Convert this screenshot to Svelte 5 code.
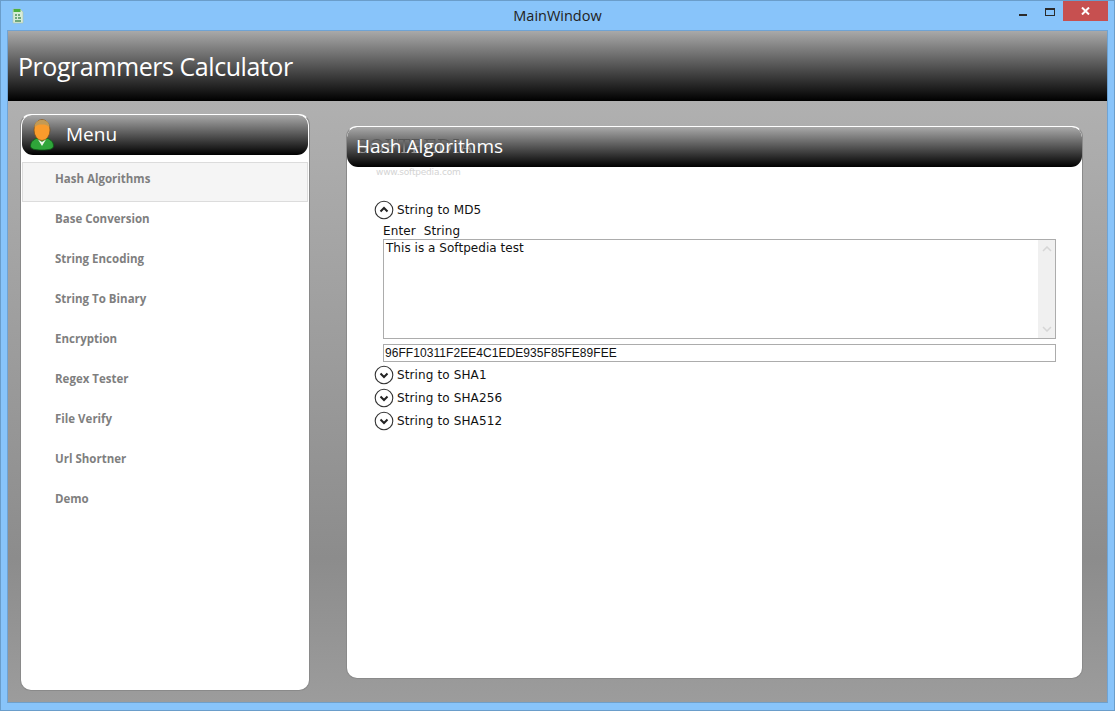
<script>
  const menu = [
    "Hash Algorithms",
    "Base Conversion",
    "String Encoding",
    "String To Binary",
    "Encryption",
    "Regex Tester",
    "File Verify",
    "Url Shortner",
    "Demo"
  ];
  const collapsed = ["String to SHA1", "String to SHA256", "String to SHA512"];
</script>

<div class="window">
  <div class="titlebar">
    <svg class="appicon" width="12" height="16" viewBox="0 0 12 16">
      <path d="M1 1h7l3 3v11H1z" fill="#d8ecd8" stroke="#a9c4a9" stroke-width="0.6" />
      <rect x="1.5" y="1" width="7" height="3" fill="#4caf3f" />
      <path d="M3 6h2v2H3zM6 6h2v2H6zM3 9h2v2H3zM6 9h3v2H6zM3 12h6v2H3z" fill="#6fa87a" />
    </svg>
    <span class="title">MainWindow</span>
    <div class="controls">
      <span class="min"></span>
      <span class="max"></span>
      <span class="close">
        <svg width="9" height="8" viewBox="0 0 9 8">
          <path d="M1 0.5l7 7M8 0.5l-7 7" stroke="#fff" stroke-width="2" />
        </svg>
      </span>
    </div>
  </div>

  <div class="client">
    <header>Programmers Calculator</header>
    <div class="content">
      <aside class="card">
        <div class="cardhead menuhead">
          <svg class="person" width="26" height="32" viewBox="0 0 26 32">
            <path d="M1.500 27c0-5 4-7 8-8.500h7c4 1.500 8 3.500 8 8.500 0 3-4 4-11.500 4S1.500 30 1.500 27z" fill="#2fa53a" stroke="#0d5c17" stroke-width="0.8" />
            <ellipse cx="13" cy="11" rx="8" ry="10.500" fill="#f99b2c" stroke="#7a4f18" stroke-width="0.7" />
            <path d="M5.500 8.500C5.500 3 9 1 13 1s7.500 2 7.500 7.500c-2-2.500-4.500-3-7.500-3s-5.500.5-7.500 3z" fill="#c29a55" />
            <path d="M9 20.500l4 6.500 4-6.500-4 2.500z" fill="#eef5ea" />
          </svg>
          <span class="menutext">Menu</span>
        </div>
        <nav>
          {#each menu as item, i}
            <div class="item" class:active={i === 0}>{item}</div>
          {/each}
        </nav>
      </aside>

      <main class="card panel">
        <div class="cardhead panelhead">
          <span class="mark">SOFTPEDIA</span>
          <span class="headtext">Hash Algorithms</span>
        </div>
        <span class="markurl">www.softpedia.com</span>
        <div class="expanders">
          <div class="exp">
            <svg width="20" height="20" viewBox="0 0 20 20">
              <circle cx="10" cy="10" r="8.8" fill="#fff" stroke="#333" stroke-width="1.1" />
              <path d="M6.500 11.500L10 8l3.500 3.500" fill="none" stroke="#222" stroke-width="2" />
            </svg>
            <span>String to MD5</span>
          </div>
          <div class="body">
            <div class="label">Enter&nbsp; String</div>
            <div class="textarea">
              <div class="text">This is a Softpedia test</div>
              <div class="scroll">
                <svg width="10" height="6" viewBox="0 0 10 6"><path d="M1 5l4-4 4 4" fill="none" stroke="#d6d6d6" stroke-width="1.5" /></svg>
                <svg width="10" height="6" viewBox="0 0 10 6"><path d="M1 1l4 4 4-4" fill="none" stroke="#d6d6d6" stroke-width="1.5" /></svg>
              </div>
            </div>
            <div class="hash">96FF10311F2EE4C1EDE935F85FE89FEE</div>
          </div>
          {#each collapsed as name}
            <div class="exp">
              <svg width="20" height="20" viewBox="0 0 20 20">
                <circle cx="10" cy="10" r="8.8" fill="#fff" stroke="#333" stroke-width="1.1" />
                <path d="M6.500 8.500L10 12l3.500-3.500" fill="none" stroke="#222" stroke-width="2" />
              </svg>
              <span>{name}</span>
            </div>
          {/each}
        </div>
      </main>
    </div>
  </div>
</div>

<style>
  :global(body) {
    margin: 0;
    background: #88c4fa;
  }

  .window {
    box-sizing: border-box;
    width: 1115px;
    height: 711px;
    display: flex;
    flex-direction: column;
    background: #88c4fa;
    border: 1px solid #6a9dca;
    padding: 0 6px 7px 6px;
    font-family: "DejaVu Sans", sans-serif;
  }

  .titlebar {
    height: 29px;
    flex: none;
    display: flex;
    align-items: center;
    justify-content: center;
    position: relative;
    font-family: "Open Sans", sans-serif;
    font-size: 14.5px;
    color: #222;
  }

  .appicon {
    position: absolute;
    left: 5px;
    top: 7px;
  }

  .controls {
    position: absolute;
    right: 0;
    top: 0;
    display: flex;
    align-items: flex-start;
  }

  .min {
    width: 8px;
    height: 2px;
    background: #2b2b2b;
    margin: 13px 18px 0 0;
  }

  .max {
    box-sizing: border-box;
    width: 10px;
    height: 8px;
    border: 1px solid #2b2b2b;
    border-top-width: 2px;
    margin: 7px 8px 0 0;
  }

  .close {
    width: 45px;
    height: 20px;
    background: #c75050;
    display: flex;
    align-items: center;
    justify-content: center;
  }

  .client {
    flex: 1;
    display: flex;
    flex-direction: column;
    min-height: 0;
    border: 1px solid #6fa3d4;
    border-bottom-color: #6f9fc9;
  }

  header {
    box-sizing: border-box;
    height: 70px;
    flex: none;
    padding: 0 0 0 10px;
    display: flex;
    align-items: center;
    background: linear-gradient(#a9a9a9 0%, #000 100%);
    color: #fff;
    font-family: "Open Sans", sans-serif;
    font-size: 25px;
    letter-spacing: -0.45px;
  }

  .content {
    flex: 1;
    min-height: 0;
    display: flex;
    align-items: stretch;
    padding: 13px 24px 11px 12px;
    gap: 36px;
    background: linear-gradient(#b0b0b0 0%, #8c8c8c 76%, #9c9c9c 100%);
  }

  .card {
    box-sizing: border-box;
    background: #fff;
    border: 1px solid #8a8a8a;
    border-top-color: #fff;
    border-radius: 11px;
    overflow: hidden;
  }

  aside {
    width: 290px;
    flex: none;
  }

  .panel {
    flex: 1;
    margin-top: 12px;
    margin-bottom: 12px;
    position: relative;
  }

  .cardhead {
    display: flex;
    align-items: center;
    background: linear-gradient(#a9a9a9 0%, #000 100%);
    color: #fff;
    font-family: "Open Sans", sans-serif;
    border-radius: 10px 10px 11px 11px;
  }

  .menuhead {
    height: 40px;
    font-size: 19px;
    padding-left: 7px;
    gap: 11px;
    margin: 0 1px;
  }

  .menutext {
    padding-bottom: 2px;
  }

  .person {
    flex: none;
    margin-bottom: 1px;
  }

  .panelhead {
    height: 40px;
    font-size: 19px;
    padding: 0 0 2px 9px;
    box-sizing: border-box;
    position: relative;
    letter-spacing: 0.05px;
  }

  .headtext {
    position: relative;
  }

  .mark {
    position: absolute;
    left: 9px;
    top: 8px;
    font-family: "DejaVu Serif", serif;
    font-size: 19px;
    letter-spacing: 0;
    color: transparent;
    background: linear-gradient(#555 20%, #949494 75%);
    -webkit-background-clip: text;
    background-clip: text;
  }

  .markurl {
    position: absolute;
    left: 29px;
    top: 40px;
    font-size: 9px;
    letter-spacing: -0.2px;
    color: #d4d4d4;
  }

  nav {
    margin-top: 7px;
    padding: 0 1px;
    display: flex;
    flex-direction: column;
  }

  .item {
    box-sizing: border-box;
    height: 40px;
    display: flex;
    align-items: center;
    padding: 0 0 8px 33px;
    font-family: "Open Sans", sans-serif;
    font-size: 11.5px;
    font-weight: 700;
    color: #7f7f7f;
  }

  .active {
    background: #f5f5f5;
    border: 1px solid #dcdcdc;
    padding-left: 32px;
  }

  .expanders {
    padding: 31px 26px 0 27px;
    color: #111;
    font-family: "DejaVu Sans", sans-serif;
    font-size: 12px;
    letter-spacing: 0.12px;
  }

  .exp {
    height: 23px;
    display: flex;
    align-items: center;
    gap: 3px;
  }

  .body {
    padding-left: 9px;
  }

  .label {
    height: 18px;
    line-height: 20px;
  }

  .textarea {
    box-sizing: border-box;
    height: 100px;
    border: 1px solid #acacac;
    display: flex;
    justify-content: space-between;
  }

  .text {
    padding: 0 0 0 2px;
    line-height: 16px;
    letter-spacing: 0.04px;
  }

  .scroll {
    width: 17px;
    background: #f0f0f0;
    display: flex;
    flex-direction: column;
    justify-content: space-between;
    align-items: center;
    padding: 6px 0;
  }

  .hash {
    box-sizing: border-box;
    height: 18px;
    margin-top: 5px;
    margin-bottom: 1px;
    border: 1px solid #acacac;
    padding-left: 1px;
    font-family: "Liberation Sans", sans-serif;
    font-size: 12px;
    letter-spacing: 0.06px;
    line-height: 16px;
  }
</style>
